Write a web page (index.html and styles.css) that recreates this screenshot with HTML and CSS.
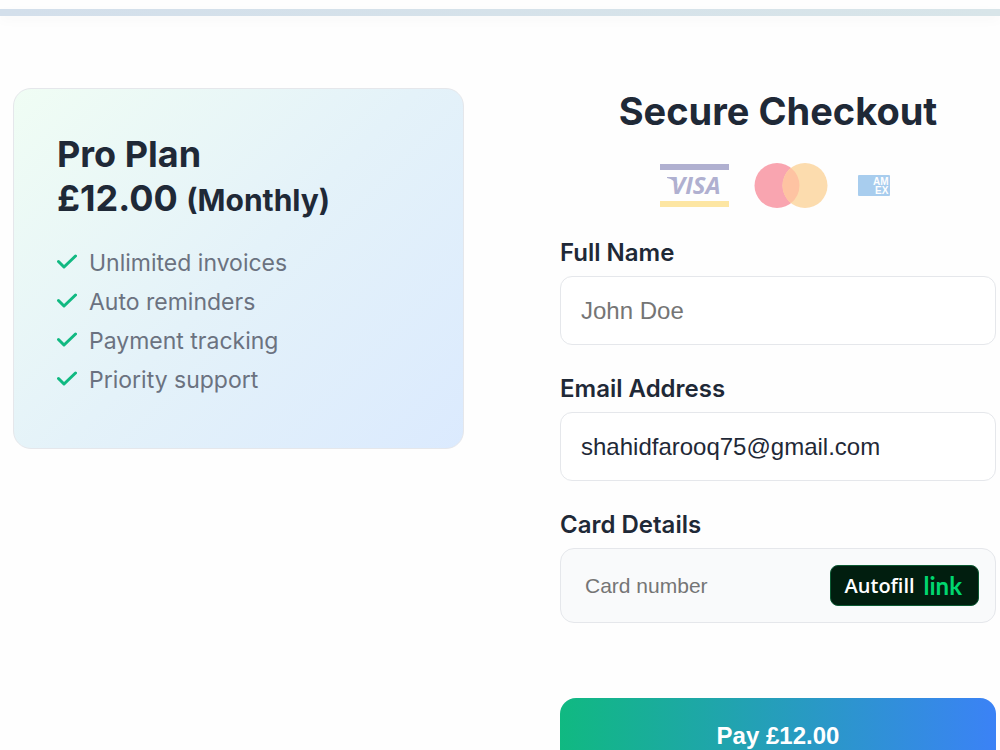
FILE: index.html
```html
<!DOCTYPE html>
<html lang="en">
<head>
  <meta charset="UTF-8" />
  <meta name="viewport" content="width=device-width, initial-scale=1.0"/>
  <title>Secure Checkout</title>
  <link rel="stylesheet" href="styles.css">
</head>
<body>
  <div class="top-bar"></div>

  <main class="checkout">
    <section class="plan-card">
      <h2>Pro Plan</h2>
      <p class="price">£12.00 <span>(Monthly)</span></p>
      <ul class="features">
        <li><svg class="check" viewBox="0 0 20 18"><path d="M1.5 7.5 7 13 18.5 2"/></svg>Unlimited invoices</li>
        <li><svg class="check" viewBox="0 0 20 18"><path d="M1.5 7.5 7 13 18.5 2"/></svg>Auto reminders</li>
        <li><svg class="check" viewBox="0 0 20 18"><path d="M1.5 7.5 7 13 18.5 2"/></svg>Payment tracking</li>
        <li><svg class="check" viewBox="0 0 20 18"><path d="M1.5 7.5 7 13 18.5 2"/></svg>Priority support</li>
      </ul>
    </section>

    <section class="payment">
      <h1>Secure Checkout</h1>

      <div class="card-logos">
        <svg width="69" height="44" viewBox="0 0 69 44" role="img" aria-label="Visa">
          <rect width="69" height="6" fill="#b0b0d0"/>
          <rect y="37" width="69" height="6" fill="#fde6a3"/>
          <path d="M7 13h8l3 9c-2-4-6-7-11-8z" fill="#b0b0d0"/>
          <text class="visa-text" x="11" y="30">VISA</text>
        </svg>
        <svg width="74" height="46" viewBox="0 0 74 46" role="img" aria-label="Mastercard">
          <circle cx="23" cy="22.5" r="22.5" fill="#f9a5b0"/>
          <circle cx="51" cy="22.5" r="22.5" fill="#fcdcae"/>
          <path d="M37 4.9a22.5 22.5 0 0 1 0 35.2a22.5 22.5 0 0 1 0-35.2z" fill="#fec3a2"/>
        </svg>
        <svg width="44" height="44" viewBox="0 0 44 44" role="img" aria-label="American Express">
          <rect x="5" y="11" width="32" height="21" rx="1" fill="#a8cdee"/>
          <text class="amex-text" x="20" y="21">AM</text>
          <text class="amex-text" x="22" y="30">EX</text>
        </svg>
      </div>

      <form id="paymentForm">
        <label for="name">Full Name</label>
        <input type="text" id="name" placeholder="John Doe" />

        <label for="email">Email Address</label>
        <input type="email" id="email" value="shahidfarooq75@gmail.com" />

        <label for="card">Card Details</label>
        <div class="card-box">
          <input type="text" id="card" placeholder="Card number" />
          <button type="button" class="autofill">Autofill <span>link</span></button>
        </div>

        <button type="submit" class="pay">Pay £12.00</button>
      </form>
    </section>
  </main>
</body>
</html>
```
FILE: styles.css
```css
* {
  box-sizing: border-box;
}
body {
  font-family: Inter, sans-serif;
  margin: 0;
  padding: 9px 0 0;
  background: #fefefe;
  color: #1f2937;
}
.top-bar {
  height: 7px;
  background: linear-gradient(90deg, #d3dfeb, #d8e5e9);
  box-shadow: 0 4px 12px rgba(0,0,0,0.03);
}
.checkout {
  display: grid;
  grid-template-columns: 451fr 436fr;
  gap: 96px;
  align-items: start;
  padding: 72px 4px 24px 13px;
}
.plan-card {
  padding: 43px 43px 49px;
  border: 1px solid #e5e7eb;
  border-radius: 18px;
  background: linear-gradient(135deg, #f0fdf4, #e4f2f9 50%, #dbeafe);
}
h1, h2, p {
  margin: 0;
}
h2 {
  font-size: 36px;
  line-height: 44px;
}
.price {
  font-size: 36px;
  font-weight: bold;
  line-height: 44px;
}
.price span {
  font-size: 30px;
}
.features {
  margin: 21px 0 0;
  padding: 0;
  list-style: none;
}
.features li {
  display: flex;
  align-items: center;
  gap: 12px;
  height: 39px;
  font-size: 23px;
  color: #6b7280;
}
.check {
  width: 20px;
  height: 18px;
  fill: none;
  stroke: #10b981;
  stroke-width: 3;
  stroke-linecap: round;
  stroke-linejoin: round;
}
h1 {
  font-size: 38px;
  line-height: 46px;
  text-align: center;
}
.card-logos {
  display: flex;
  justify-content: center;
  align-items: center;
  gap: 25px;
  margin: 29px 0 30px;
}
.visa-text {
  font: italic bold 24px "Open Sans", sans-serif;
  fill: #b0b0d0;
}
.amex-text {
  font: bold 10px "Liberation Sans", sans-serif;
  fill: #fefefe;
}
label {
  display: block;
  margin-bottom: 9px;
  font-size: 24px;
  font-weight: 600;
  line-height: 28px;
}
input {
  width: 100%;
  height: 69px;
  padding: 0 20px;
  margin-bottom: 30px;
  border: 1px solid #e5e7eb;
  border-radius: 12px;
  background: #fff;
  color: #1f2937;
  font-family: "Liberation Sans", sans-serif;
  font-size: 24px;
}
input::placeholder {
  color: #757575;
}
.card-box {
  display: flex;
  align-items: center;
  height: 75px;
  padding: 0 16px 0 24px;
  border: 1px solid #e5e7eb;
  border-radius: 14px;
  background: #f9fafb;
}
.card-box input {
  flex: 1;
  min-width: 0;
  height: 40px;
  padding: 0;
  margin: 0;
  border: none;
  background: none;
  font-size: 21px;
}
.autofill {
  display: flex;
  align-items: center;
  gap: 9px;
  height: 41px;
  padding: 0 16px 0 14px;
  border: 1px solid #0b5a33;
  border-radius: 8px;
  background: #011e0f;
  color: white;
  font-family: "Open Sans", sans-serif;
  font-size: 20px;
  font-weight: 600;
  line-height: 28px;
  white-space: nowrap;
  cursor: pointer;
}
.autofill span {
  color: #00d66f;
  font-family: Lato, sans-serif;
  font-size: 24px;
  font-weight: bold;
}
.pay {
  width: 100%;
  height: 75px;
  margin-top: 75px;
  border: none;
  border-radius: 16px;
  background: linear-gradient(90deg, #10b981, #3b82f6);
  color: white;
  font-family: "Liberation Sans", sans-serif;
  font-size: 24px;
  font-weight: bold;
  cursor: pointer;
}
```
